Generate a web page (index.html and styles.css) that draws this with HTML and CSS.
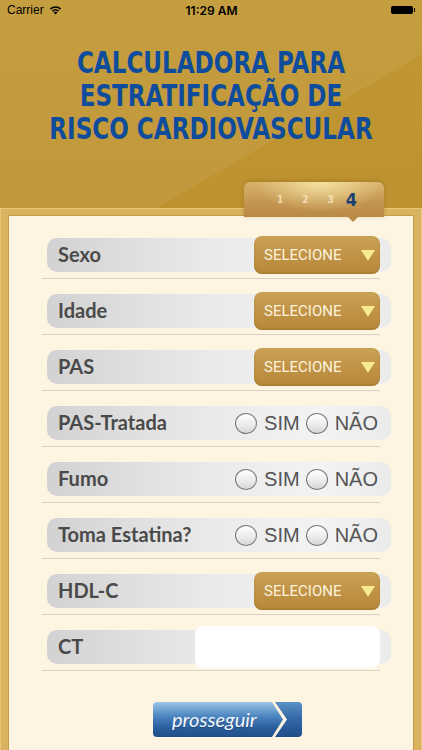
FILE: index.html
```html
<!DOCTYPE html>
<html lang="pt">
<head>
  <meta charset="UTF-8" />
  <meta name="viewport" content="width=device-width, initial-scale=1.0" />
  <title>Calculadora de Risco Cardiovascular</title>
  <link rel="stylesheet" href="styles.css">
</head>
<body>
  <div class="status-bar">
    <div class="status-left">
      Carrier
      <svg class="wifi" width="13" height="10" viewBox="0 0 13 10">
        <path d="M6.5 9.6 4.6 7.5a2.8 2.8 0 0 1 3.8 0z" fill="#000"/>
        <path d="M3.4 6.2a4.6 4.6 0 0 1 6.2 0" stroke="#000" stroke-width="1.5" fill="none"/>
        <path d="M1.4 4.1a7.5 7.5 0 0 1 10.2 0" stroke="#000" stroke-width="1.5" fill="none"/>
      </svg>
    </div>
    <div class="status-time">11:29 AM</div>
    <div class="status-right"><span class="battery"></span></div>
  </div>

  <header class="hero">
    <h1>CALCULADORA PARA<br>ESTRATIFICAÇÃO DE<br>RISCO CARDIOVASCULAR</h1>
  </header>

  <main class="card">
    <div class="steps">
      <span>1</span>
      <span>2</span>
      <span>3</span>
      <span class="current">4</span>
    </div>

    <div class="field">
      <div class="pill">
        <span class="label">Sexo</span>
        <button type="button" class="select">SELECIONE<i class="caret"></i></button>
      </div>
    </div>
    <div class="field">
      <div class="pill">
        <span class="label">Idade</span>
        <button type="button" class="select">SELECIONE<i class="caret"></i></button>
      </div>
    </div>
    <div class="field">
      <div class="pill">
        <span class="label">PAS</span>
        <button type="button" class="select">SELECIONE<i class="caret"></i></button>
      </div>
    </div>
    <div class="field">
      <div class="pill">
        <span class="label">PAS-Tratada</span>
        <div class="choice">
          <span class="radio"></span><span class="opt">SIM</span>
          <span class="radio"></span><span class="opt">NÃO</span>
        </div>
      </div>
    </div>
    <div class="field">
      <div class="pill">
        <span class="label">Fumo</span>
        <div class="choice">
          <span class="radio"></span><span class="opt">SIM</span>
          <span class="radio"></span><span class="opt">NÃO</span>
        </div>
      </div>
    </div>
    <div class="field">
      <div class="pill">
        <span class="label">Toma Estatina?</span>
        <div class="choice">
          <span class="radio"></span><span class="opt">SIM</span>
          <span class="radio"></span><span class="opt">NÃO</span>
        </div>
      </div>
    </div>
    <div class="field">
      <div class="pill">
        <span class="label">HDL-C</span>
        <button type="button" class="select">SELECIONE<i class="caret"></i></button>
      </div>
    </div>
    <div class="field">
      <div class="pill">
        <span class="label">CT</span>
        <input type="text" class="text-input" />
      </div>
    </div>

    <button type="button" class="go">
      <span class="go-body">prosseguir</span>
      <span class="go-tip"></span>
    </button>
  </main>
</body>
</html>
```

FILE: styles.css
```css
/* Gold background with the cream form card */
body {
  margin: 0;
  height: 750px;
  overflow: hidden;
  font-family: "Lato", sans-serif;
  background:
    linear-gradient(150deg, rgba(255, 255, 255, 0.06) 0 30%, transparent 30% 60%, rgba(255, 255, 255, 0.04) 60%),
    linear-gradient(180deg, #c19833 0%, #b98b2b 60%, #b68829 100%);
}

.status-bar {
  height: 20px;
  display: grid;
  grid-template-columns: 1fr auto 1fr;
  align-items: center;
  padding: 0 6px 0 7px;
  font-family: "Liberation Sans", sans-serif;
  font-size: 12px;
  color: #000;
}

.status-left {
  display: flex;
  align-items: center;
  gap: 5px;
}

.status-time {
  font-family: "Inter", sans-serif;
  font-weight: 600;
  font-size: 12px;
}

.status-right {
  display: flex;
  justify-content: flex-end;
}

.battery {
  position: relative;
  width: 22px;
  height: 8px;
  background: #000;
  border-radius: 2px;
  margin-right: 3px;
}

.battery::after {
  content: "";
  position: absolute;
  right: -2px;
  top: 2px;
  width: 1px;
  height: 4px;
  background: #000;
}

.hero {
  height: 189px;
}

/* condensed display face: DejaVu Condensed squeezed to the original width */
.hero h1 {
  margin: 0;
  padding-top: 26px;
  text-align: center;
  font-family: "DejaVu Sans Condensed", sans-serif;
  font-weight: bold;
  font-size: 30px;
  line-height: 33px;
  color: #0f4c9b;
  transform: scaleX(0.855);
}

.card {
  position: relative;
  margin: 0 1px;
  height: 600px;
  padding-top: 23px;
  background: #fdf4e1;
  border: solid #d9b35f;
  border-width: 6px 7px 0;
  box-shadow: 0 0 0 1px #e7c874, inset 0 0 0 1px #c89d48;
}

.steps {
  position: absolute;
  top: -33px;
  right: 30px;
  width: 140px;
  height: 35px;
  display: flex;
  align-items: center;
  padding-left: 33px;
  gap: 19px;
  box-sizing: border-box;
  border-radius: 6px 6px 0 0;
  background:
    radial-gradient(ellipse at 55% 0%, rgba(255, 240, 180, 0.75), transparent 60%),
    linear-gradient(180deg, #d8b36a 0%, #c39650 60%, #b98a46 100%);
  box-shadow: 0 -1px 4px rgba(120, 80, 20, 0.35);
  font-family: "DejaVu Sans Condensed", sans-serif;
  font-weight: bold;
  font-size: 10px;
  color: rgba(255, 238, 205, 0.75);
}

.steps::after {
  content: "";
  position: absolute;
  left: 104px;
  bottom: -5px;
  border-left: 5px solid transparent;
  border-right: 5px solid transparent;
  border-top: 5px solid #b98a46;
}

.steps .current {
  font-size: 18px;
  color: #1c3f74;
  margin-left: -7px;
}

.field {
  margin: 0 0 15px 34px;
  width: 338px;
  padding-bottom: 6px;
  border-bottom: 1px solid #d8d2c4;
}

.pill {
  box-sizing: border-box;
  margin-left: 5px;
  width: 344px;
  height: 34px;
  display: flex;
  align-items: center;
  justify-content: space-between;
  padding: 0 11px;
  border-radius: 10px;
  background: linear-gradient(90deg, #d2d2d2 0%, #e9e9e9 45%, #f3f3f3 80%, #ebebeb 100%);
}

.label {
  font-weight: bold;
  font-size: 20px;
  color: #4a4a4a;
  margin-top: -2px;
}

.select {
  flex: none;
  display: flex;
  align-items: center;
  justify-content: space-between;
  width: 126px;
  height: 38px;
  padding: 0 5px 0 10px;
  border: none;
  border-radius: 8px;
  background: linear-gradient(180deg, #caa256 0%, #bf9246 55%, #b7883c 100%);
  box-shadow: inset 0 -1px 2px rgba(120, 80, 20, 0.35);
  font-family: "Roboto", sans-serif;
  font-size: 15px;
  color: #fdf3dc;
  cursor: pointer;
}

.caret {
  width: 0;
  height: 0;
  border-left: 7px solid transparent;
  border-right: 7px solid transparent;
  border-top: 11px solid #f8e98e;
}

.choice {
  display: flex;
  align-items: center;
  font-family: "Liberation Sans", sans-serif;
  font-size: 20px;
  color: #555;
}

.radio {
  width: 20px;
  height: 19px;
  border: 1px solid #777;
  border-radius: 50%;
  background: linear-gradient(180deg, #ffffff 0%, #eeeeee 50%, #d6d6d6 100%);
  margin-right: 7px;
}

.opt {
  margin-right: 6px;
}

.opt:last-child {
  margin-right: 2px;
}

.text-input {
  width: 185px;
  height: 42px;
  box-sizing: border-box;
  border: none;
  border-radius: 8px;
  background: #fff;
}

.go {
  display: flex;
  margin: 31px 0 0 145px;
  padding: 0;
  border: none;
  background: none;
  cursor: pointer;
}

.go-body {
  width: 130px;
  height: 35px;
  box-sizing: border-box;
  padding: 5px 0 0 19px;
  text-align: left;
  border-radius: 4px 0 0 4px;
  clip-path: polygon(0 0, calc(100% - 11px) 0, 100% 50%, calc(100% - 11px) 100%, 0 100%);
  background: linear-gradient(180deg, #9ac6e6 0%, #4d86c0 40%, #2a5d9c 75%, #1f4f8c 100%);
  font-family: "Lato", sans-serif;
  font-style: italic;
  font-size: 20px;
  color: #f4f8fc;
  text-shadow: 0 1px 1px rgba(0, 30, 80, 0.4);
}

.go-tip {
  width: 27px;
  height: 35px;
  margin-left: -8px;
  border-radius: 0 4px 4px 0;
  clip-path: polygon(0 0, 100% 0, 100% 100%, 0 100%, 12px 50%);
  background: linear-gradient(180deg, #5d92c6 0%, #3469a8 45%, #1f4d8a 100%);
}
```
